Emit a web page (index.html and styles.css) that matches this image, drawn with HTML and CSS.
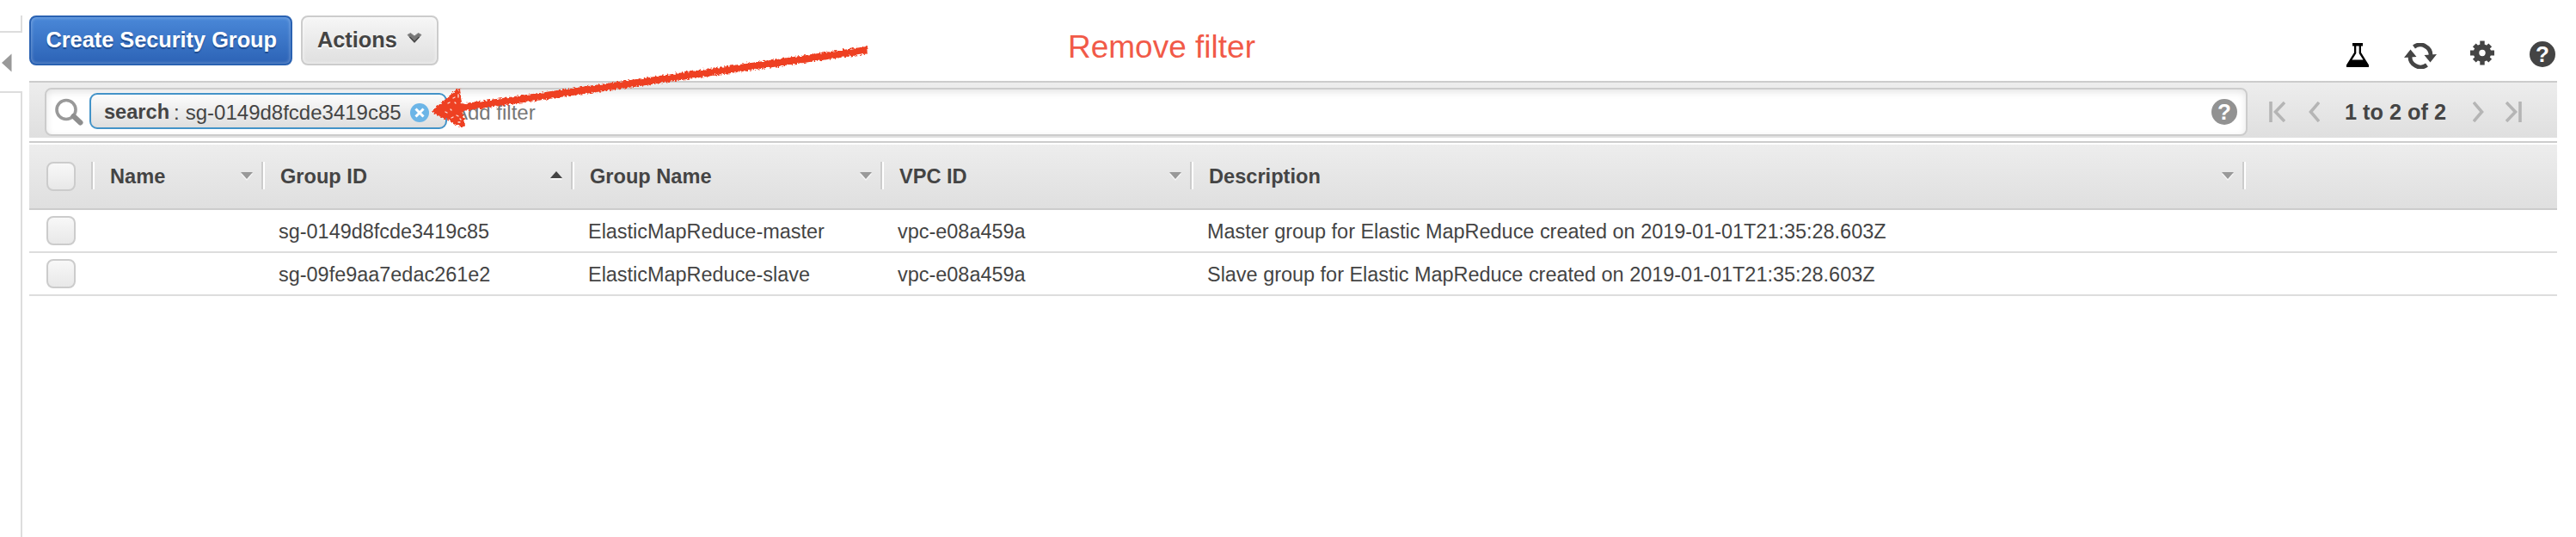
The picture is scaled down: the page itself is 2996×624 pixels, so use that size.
FILE: index.html
```
<!DOCTYPE html>
<html lang="en">
<head>
<meta charset="utf-8">
<title>Security Groups</title>
<link rel="stylesheet" href="styles.css">
</head>
<body>
<aside class="sidebar">
  <div class="side-top"></div>
  <div class="side-handle"><svg width="12" height="22" viewBox="0 0 12 22"><path d="M11.500 .5V21.500L0 11Z" fill="#999"/></svg></div>
  <div class="side-panel"></div>
</aside>
<main class="main">
  <header class="toolbar">
    <button class="btn primary">Create Security Group</button>
    <button class="btn">Actions
      <svg class="caret" width="18" height="12" viewBox="0 0 18 12"><path d="M1 2.500L4.500 .5 9 4 13.500 .5 17 2.500 9 11.500Z" fill="#777" stroke="#8a8a8a"/><path d="M3.500 5L9 10.500 14.500 5" fill="none" stroke="#444" stroke-width="1.300"/></svg>
    </button>
    <div class="tools">
      <svg class="flask" width="28" height="28" viewBox="0 0 28 28"><path d="M8 0H20V3.500H18V11L27 25.500V28H1V25.500L10 11V3.500H8Z" fill="#000"/><path d="M12.300 3.500H15.700V12L20.500 19.500H7.500L12.300 12Z" fill="#fff"/></svg>
      <svg class="refresh" width="38" height="30" viewBox="0 0 38 30"><g fill="none" stroke="#444" stroke-width="4.800"><path d="M11.500 4.500A12.200 12.200 0 0 1 31 15"/><path d="M26.500 25.500A12.200 12.200 0 0 1 7 15"/></g><path d="M23.500 14L38 13 30.500 22.500ZM0 17L7.500 7.500 14.500 16Z" fill="#444"/></svg>
      <svg class="gear" width="28" height="29" viewBox="-14 -14.500 28 29"><g fill="#444"><circle r="10.300"/><path d="M-2.700-14H2.700V14H-2.700ZM-14-3H14V3H-14Z"/><path d="M-2.700-13H2.700V13H-2.700ZM-13-2.700H13V2.700H-13Z" transform="rotate(45)"/></g><circle r="3.700" fill="#fff"/></svg>
      <span class="help">?</span>
    </div>
  </header>
  <section class="filterbar">
    <div class="searchbox">
      <svg class="magnifier" width="34" height="32" viewBox="0 0 34 32"><circle cx="14" cy="13.500" r="11" fill="none" stroke="#999" stroke-width="3.600"/><path d="M22.500 21L30.500 28.500" stroke="#8e8e8e" stroke-width="6" stroke-linecap="round"/></svg>
      <div class="tag"><b>search</b><span class="colon">:</span><span>sg-0149d8fcde3419c85</span>
        <svg class="clear" width="22" height="22" viewBox="0 0 22 22"><circle cx="11" cy="11" r="11" fill="#6cb5e7"/><path d="M6.500 6.500L15.500 15.500M15.500 6.500L6.500 15.500" stroke="#fff" stroke-width="3"/></svg>
      </div>
      <span class="placeholder">Add filter</span>
      <span class="help gray">?</span>
    </div>
    <nav class="pager">
      <svg width="19" height="24" viewBox="0 0 19 24"><path d="M2 0V24M18 1L7.500 12 18 23"/></svg>
      <svg class="prev" width="13" height="24" viewBox="0 0 13 24"><path d="M12 1L2.500 12 12 23"/></svg>
      <b>1 to 2 of 2</b>
      <svg class="next" width="13" height="24" viewBox="0 0 13 24"><path d="M1 1L10.500 12 1 23"/></svg>
      <svg class="last" width="19" height="24" viewBox="0 0 19 24"><path d="M17 0V24M1 1L11.500 12 1 23"/></svg>
    </nav>
  </section>
  <section class="grid">
    <div class="row head">
      <div class="cell check"><i class="checkbox"></i></div>
      <div class="cell">Name<i class="sort"></i></div>
      <div class="cell">Group ID<i class="sort up"></i></div>
      <div class="cell">Group Name<i class="sort"></i></div>
      <div class="cell">VPC ID<i class="sort"></i></div>
      <div class="cell">Description<i class="sort"></i></div>
      <div class="cell rest"></div>
    </div>
    <div class="row">
      <div class="cell check"><i class="checkbox"></i></div><div class="cell"></div>
      <div class="cell">sg-0149d8fcde3419c85</div>
      <div class="cell">ElasticMapReduce-master</div>
      <div class="cell">vpc-e08a459a</div>
      <div class="cell">Master group for Elastic MapReduce created on 2019-01-01T21:35:28.603Z</div>
    </div>
    <div class="row">
      <div class="cell check"><i class="checkbox"></i></div><div class="cell"></div>
      <div class="cell">sg-09fe9aa7edac261e2</div>
      <div class="cell">ElasticMapReduce-slave</div>
      <div class="cell">vpc-e08a459a</div>
      <div class="cell">Slave group for Elastic MapReduce created on 2019-01-01T21:35:28.603Z</div>
    </div>
  </section>
</main>
<div class="note">Remove filter</div>
<svg class="arrow" width="530" height="120" viewBox="490 40 530 120">
  <defs><filter id="crayon" x="-5%" y="-10%" width="110%" height="120%"><feTurbulence type="fractalNoise" baseFrequency=".4" numOctaves="2" seed="4"/><feDisplacementMap in="SourceGraphic" scale="5" xChannelSelector="R" yChannelSelector="G"/></filter></defs>
  <g filter="url(#crayon)" fill="#ee4023">
    <path d="M535 121L1008 54 1009 62.500 535 129.500Z"/>
    <path d="M503 129L509 123 531 104 535 103 537 122 541 146 538 149 520 139 506 133Z"/>
  </g>
  <path d="M527 114l2-1M533 110l0 3M521 120l2-1M531 134l2 1M525 137l2-1M533 142l2 0M518 130l2 1M529 119l1 1M524 127l1 1M535 138l1 1" stroke="#fbe3de" stroke-width="1.300" stroke-linecap="round"/>
</svg>
</body>
</html>
```
FILE: styles.css
```
* { box-sizing: border-box; }
body {
  margin: 0;
  height: 624px;
  display: flex;
  gap: 8px;
  position: relative;
  overflow: hidden;
  background: #fff;
  color: #444;
  font-family: "Liberation Sans", Arial, sans-serif;
  font-size: 23.45px;
}
svg { display: block; flex: none; }

.sidebar { width: 26px; padding-top: 18px; display: flex; flex-direction: column; }
.side-top { height: 20px; border: solid #ddd; border-width: 0 2px 2px 0; }
.side-handle { height: 68px; padding: 24px 0 0 2px; }
.side-panel { flex: 1; border: solid #ddd; border-width: 2px 2px 0 0; }

.main { width: 2940px; }
.toolbar { height: 94px; padding-top: 18px; display: flex; align-items: flex-start; gap: 10px; }
.btn {
  height: 58px;
  width: 160px;
  padding: 0 0 1px 17px;
  display: flex;
  align-items: center;
  border: 2px solid #ccc;
  border-radius: 8px;
  background: linear-gradient(#f6f6f6, #dfdfdf);
  box-shadow: inset 0 0 4px rgba(255, 255, 255, .8);
  color: #444;
  font: bold 25.3px "Liberation Sans", Arial, sans-serif;
  text-shadow: 0 2px 0 #fff;
  white-space: nowrap;
}
.btn.primary {
  width: 306px;
  padding-left: 17.5px;
  border-color: #2a62b2;
  background: linear-gradient(#4a88d8, #2c63b6);
  box-shadow: inset 0 0 4px rgba(255, 255, 255, .4);
  color: #fff;
  text-shadow: 0 2px 1px #1f4c8f;
}
.caret { margin: -5px 0 0 11px; }
.tools { display: flex; margin: 29px 2px 0 auto; }
.flask { margin: 3px 40px 0 0; }
.refresh { margin: 3px 39px 0 0; }
.gear { margin-right: 41px; }
.help {
  flex: none;
  width: 30px;
  height: 30px;
  margin-top: 1px;
  border-radius: 50%;
  background: #444;
  color: #fff;
  font: bold 26px/31px "Liberation Sans", Arial, sans-serif;
  text-align: center;
}
.help.gray { margin: 0 10px 0 auto; background: #929292; }

.filterbar {
  height: 66px;
  padding: 6px 0 0 18px;
  display: flex;
  border-top: 2px solid #ccc;
  background: linear-gradient(#ededed, #dfdfdf);
}
.searchbox {
  width: 2562px;
  height: 56px;
  padding-left: 9px;
  display: flex;
  align-items: center;
  border: 2px solid #ccc;
  border-radius: 8px;
  background: #fff;
  box-shadow: inset 0 3px 8px #e4e4e4;
  font-size: 24px;
}
.magnifier { margin: 0 7px 0 0; }
.tag {
  width: 416px;
  height: 42px;
  margin-top: -2px;
  padding: 3px 0 0 15px;
  display: flex;
  align-items: center;
  border: 2px solid #4393c8;
  border-radius: 9px;
  background: linear-gradient(#fcfcfc, #dedede);
}
.tag b { font-size: 23.6px; }
.colon { margin: 0 7px 0 5px; }
.clear { margin-left: 10px; }
.placeholder { margin: 1px 0 0 8px; color: #777; }
.pager { display: flex; align-items: center; height: 54px; margin: 1px 0 0 25px; font-size: 25.3px; }
.pager path { fill: none; stroke: #b5b5b5; stroke-width: 3.600; }
.prev { margin: 0 29px 0 27px; }
.next { margin: 0 25px 0 31px; }

.grid { margin-top: 4px; padding-top: 2px; border-top: 2px solid #ccc; }
.row {
  height: 50px;
  display: grid;
  grid-template-columns: 76px 198px 360px 360px 360px 1224px 1fr;
  border-bottom: 2px solid #ddd;
}
.cell { display: flex; align-items: center; padding: 2px 0 0 16px; white-space: nowrap; }
.cell.check { padding: 0 0 1px 20px; }
.checkbox {
  width: 34px;
  height: 34px;
  border: 2px solid #ccc;
  border-radius: 8px;
  background: linear-gradient(#f8f8f8, #e8e8e8);
}
.head {
  height: 76px;
  border-bottom-color: #ccc;
  background: linear-gradient(#ededed, #dfdfdf);
  font-size: 23.6px;
  font-weight: bold;
}
.head .cell { padding: 0 0 0 18px; }
.head .cell.check { padding: 0 0 0 20px; }
.head .cell::after {
  content: "";
  width: 4px;
  height: 32px;
  margin: 0 0 2px 10px;
  background: linear-gradient(90deg, #ccc 50%, #fff 50%);
}
.head .check::after { margin-left: auto; }
.head .rest::after { content: none; }
.sort {
  margin: 0 0 2px auto;
  border: solid transparent;
  border-width: 8px 7px 0;
  border-top-color: #999;
  filter: drop-shadow(0 2px 0 #f6f6f6);
}
.sort.up { border-width: 0 7px 8px; border-bottom-color: #444; margin-bottom: 4px; }

.note { position: absolute; left: 1242px; top: 34px; font-size: 37px; line-height: 42px; color: #f15a48; }
.arrow { position: absolute; left: 490px; top: 40px; }
```
